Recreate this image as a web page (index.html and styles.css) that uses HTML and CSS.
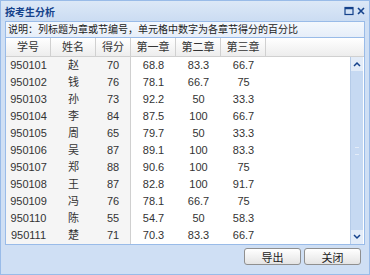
FILE: index.html
```html
<!DOCTYPE html>
<html lang="zh-CN">
<head>
    <meta charset="UTF-8">
    <title>按考生分析</title>
    <link rel="stylesheet" href="styles.css">
</head>
<body>
    <div class="window">
        <div class="titlebar">
            <div class="title">按考生分析</div>
            <div class="tools">
                <svg width="10" height="10" viewBox="0 0 10 10"><rect x="1" y="1.5" width="8" height="7" fill="none" stroke="#15428b" stroke-width="1.2"/><line x1="1" y1="2.5" x2="9" y2="2.5" stroke="#15428b" stroke-width="1.5"/></svg>
                <svg width="10" height="10" viewBox="0 0 10 10"><path d="M2 2 L8 8 M8 2 L2 8" stroke="#15428b" stroke-width="1.6"/></svg>
            </div>
        </div>
        <div class="content">
            <div class="desc">说明：列标题为章或节编号，单元格中数字为各章节得分的百分比</div>
            <div class="grid">
                <div class="grid-head">
                    <div class="cell c1">学号</div>
                    <div class="cell c2">姓名</div>
                    <div class="cell c3">得分</div>
                    <div class="cell c4">第一章</div>
                    <div class="cell c5">第二章</div>
                    <div class="cell c6">第三章</div>
                </div>
                <div class="grid-body">
                    <div class="rows" id="rows"></div>
                    <div class="scrollbar">
                        <div class="arrow">
                            <svg width="8" height="6" viewBox="0 0 8 6"><path d="M1 5 L4 2 L7 5" fill="none" stroke="#15428b" stroke-width="1.5"/></svg>
                        </div>
                        <div class="track"><span class="grip"></span></div>
                        <div class="arrow">
                            <svg width="8" height="6" viewBox="0 0 8 6"><path d="M1 1 L4 4 L7 1" fill="none" stroke="#15428b" stroke-width="1.5"/></svg>
                        </div>
                    </div>
                </div>
            </div>
        </div>
        <div class="footer">
            <button class="btn">导出</button>
            <button class="btn">关闭</button>
        </div>
    </div>
    <script>
        const data = [
            ['950101', '赵', '70', '68.8', '83.3', '66.7'],
            ['950102', '钱', '76', '78.1', '66.7', '75'],
            ['950103', '孙', '73', '92.2', '50', '33.3'],
            ['950104', '李', '84', '87.5', '100', '66.7'],
            ['950105', '周', '65', '79.7', '50', '33.3'],
            ['950106', '吴', '87', '89.1', '100', '83.3'],
            ['950107', '郑', '88', '90.6', '100', '75'],
            ['950108', '王', '87', '82.8', '100', '91.7'],
            ['950109', '冯', '76', '78.1', '66.7', '75'],
            ['950110', '陈', '55', '54.7', '50', '58.3'],
            ['950111', '楚', '71', '70.3', '83.3', '66.7']
        ];

        const rows = document.getElementById('rows');
        data.forEach(row => {
            rows.innerHTML += `
                <div class="row">
                    ${row.map((v, i) => `<div class="cell c${i + 1}">${v}</div>`).join('')}
                </div>
            `;
        });
    </script>
</body>
</html>
```

FILE: styles.css
```css
body {
    margin: 0;
    padding: 0;
    font-family: "Liberation Sans", "Noto Sans CJK SC", sans-serif;
    font-size: 11px;
    color: #333;
}
.window {
    width: 370px;
    height: 275px;
    box-sizing: border-box;
    border: 1px solid #99bbe8;
    background-color: #cfdff4;
    display: flex;
    flex-direction: column;
}
.titlebar {
    height: 20px;
    display: flex;
    align-items: center;
    justify-content: space-between;
    padding: 0 3px 0 4px;
    background: linear-gradient(#dce8f7, #cbdcf2);
}
.titlebar .title {
    font-size: 10px;
    font-weight: bold;
    color: #15428b;
}
.titlebar .tools {
    display: flex;
    gap: 2px;
}
.content {
    padding: 0 4px;
    display: flex;
    flex-direction: column;
}
.desc {
    height: 15px;
    line-height: 15px;
    padding-left: 2px;
    font-size: 10px;
    border: 1px solid #99bbe8;
    border-bottom: none;
    background: linear-gradient(#f4f8fd, #e6eef9);
    color: #222;
}
.grid {
    border: 1px solid #99bbe8;
    background-color: white;
}
.grid-head {
    display: flex;
    height: 18px;
    background: linear-gradient(#ffffff, #ededed);
    border-bottom: 1px solid #d0d0d0;
}
.grid-head .cell {
    line-height: 18px;
    border-right: 1px solid #d0d0d0;
    color: #333;
}
.grid-body {
    display: flex;
    height: 187px;
}
.rows {
    flex: 1;
}
.row {
    display: flex;
    height: 17px;
}
.row .cell {
    line-height: 17px;
}
.row .c1,
.row .c2,
.row .c3 {
    background-color: #f5f5f5;
}
.row .c3 {
    border-right: 1px solid #d0d0d0;
}
.cell {
    text-align: center;
    box-sizing: border-box;
}
.c1 { width: 45px; }
.c2 { width: 45px; }
.c3 { width: 35px; }
.c4 { width: 45px; }
.c5 { width: 45px; }
.c6 { width: 45px; }
.scrollbar {
    width: 12px;
    margin-right: 1px;
    display: flex;
    flex-direction: column;
    background-color: #c6d9f2;
    border-left: 1px solid #b5cbe8;
}
.scrollbar .arrow {
    height: 14px;
    display: flex;
    align-items: center;
    justify-content: center;
    background-color: #e3ecf8;
}
.scrollbar .track {
    flex: 1;
    display: flex;
    align-items: center;
    justify-content: center;
}
.scrollbar .grip {
    width: 4px;
    height: 6px;
    border-top: 1px solid #e3ecf8;
    border-bottom: 1px solid #e3ecf8;
}
.footer {
    display: flex;
    justify-content: flex-end;
    gap: 3px;
    padding: 3px 8px 0 0;
}
.btn {
    width: 57px;
    height: 17px;
    padding: 0;
    border: 1px solid #8f8f8f;
    border-radius: 3px;
    background: linear-gradient(#ffffff, #e4e4e4);
    font-family: "Liberation Sans", "Noto Sans CJK SC", sans-serif;
    font-size: 11px;
    color: #222;
}
```
